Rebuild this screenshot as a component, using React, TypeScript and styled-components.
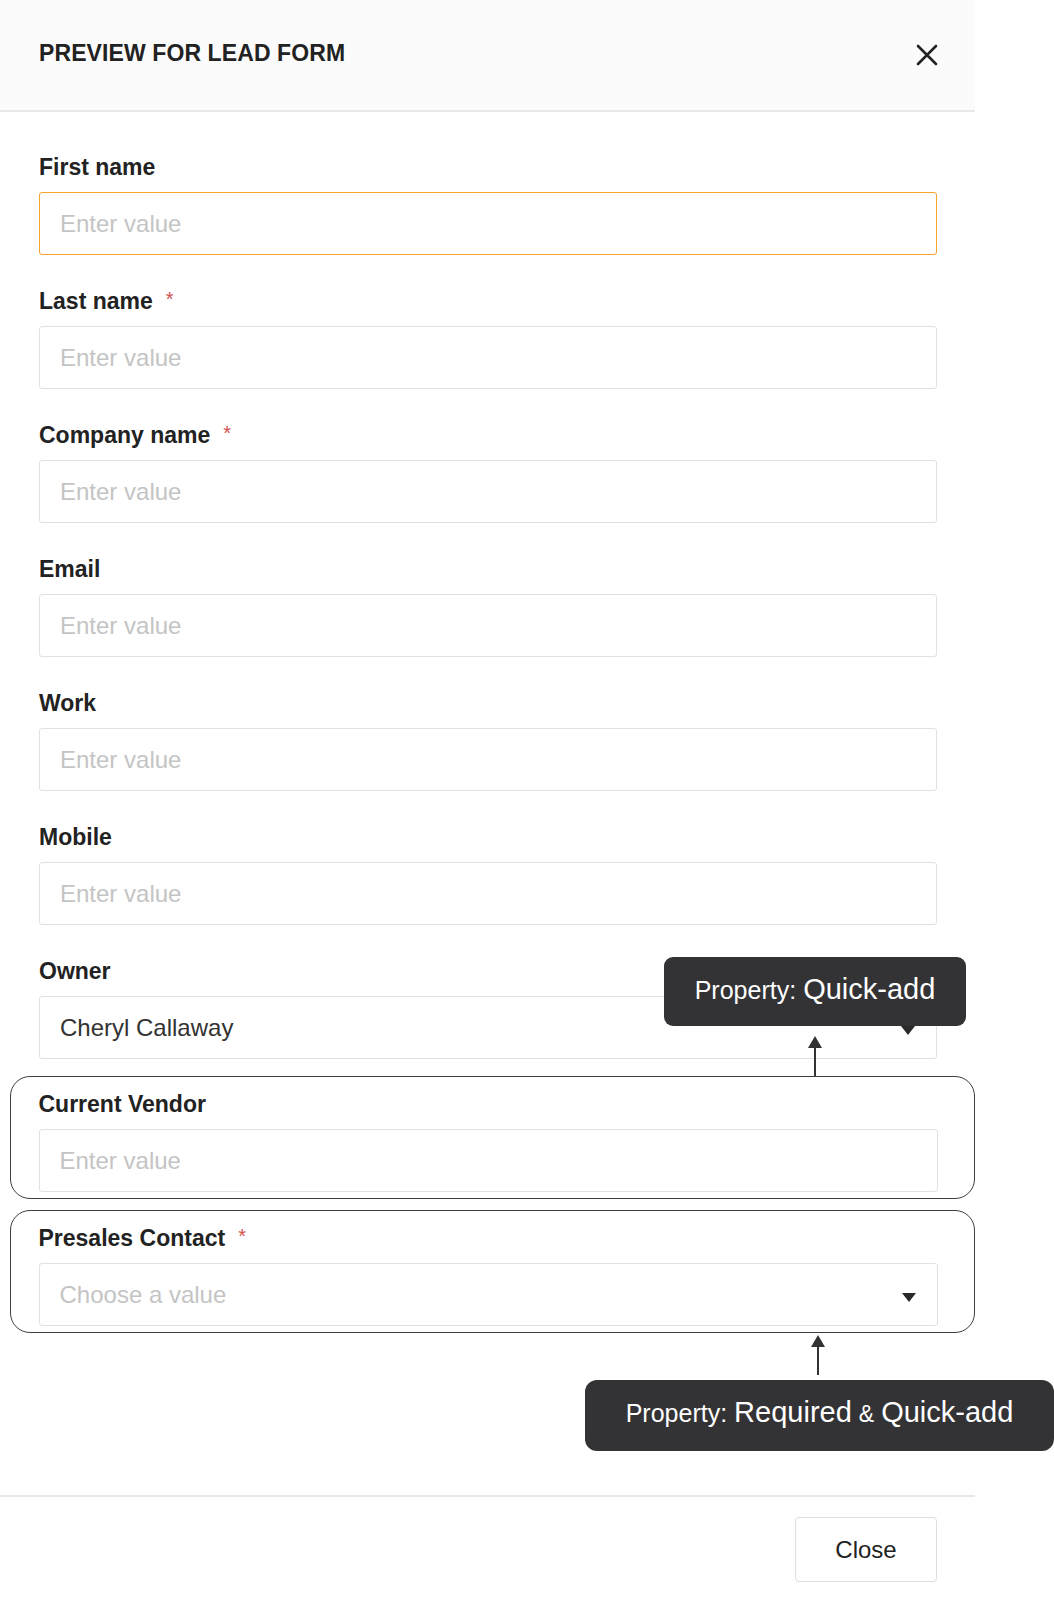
import styled, { createGlobalStyle } from 'styled-components';

const GlobalStyle = createGlobalStyle`
  * {
    box-sizing: border-box;
  }
  body {
    margin: 0;
    background: #ffffff;
    font-family: 'Liberation Sans', Arial, sans-serif;
    color: #222222;
  }
`;

type FieldDef = {
  label: string;
  required?: boolean;
  kind: 'input' | 'select';
  value?: string;
  placeholder: string;
  active?: boolean;
  boxed?: boolean;
};

const fields: FieldDef[] = [
  { label: 'First name', kind: 'input', placeholder: 'Enter value', active: true },
  { label: 'Last name', required: true, kind: 'input', placeholder: 'Enter value' },
  { label: 'Company name', required: true, kind: 'input', placeholder: 'Enter value' },
  { label: 'Email', kind: 'input', placeholder: 'Enter value' },
  { label: 'Work', kind: 'input', placeholder: 'Enter value' },
  { label: 'Mobile', kind: 'input', placeholder: 'Enter value' },
  { label: 'Owner', kind: 'select', placeholder: 'Choose a value', value: 'Cheryl Callaway' },
  { label: 'Current Vendor', kind: 'input', placeholder: 'Enter value', boxed: true },
  {
    label: 'Presales Contact',
    required: true,
    kind: 'select',
    placeholder: 'Choose a value',
    boxed: true,
  },
];

function CloseIcon() {
  return (
    <svg width="22" height="22" viewBox="0 0 22 22">
      <path d="M2 2 L20 20 M20 2 L2 20" stroke="#222" strokeWidth="2.6" strokeLinecap="round" />
    </svg>
  );
}

function UpArrow() {
  return (
    <svg width="16" height="40" viewBox="0 0 16 40">
      <path d="M8 0 L15 12 L1 12 Z" fill="#333" />
      <path d="M8 10 L8 40" stroke="#333" strokeWidth="2" />
    </svg>
  );
}

function FieldBlock({ f }: { f: FieldDef }) {
  const Wrap = f.boxed ? BoxedField : Field;
  return (
    <Wrap>
      <Label>
        {f.label}
        {f.required && <Star>*</Star>}
      </Label>
      {f.kind === 'input' ? (
        <Input $active={f.active} placeholder={f.placeholder} readOnly />
      ) : (
        <SelectBox>
          <SelectText $empty={!f.value}>{f.value || f.placeholder}</SelectText>
          <Caret />
        </SelectBox>
      )}
    </Wrap>
  );
}

export default function App() {
  return (
    <>
      <GlobalStyle />
      <Page>
        <Panel>
          <Header>
            <Title>PREVIEW FOR LEAD FORM</Title>
            <CloseButton>
              <CloseIcon />
            </CloseButton>
          </Header>
          <Form>
            {fields.map((f) => (
              <FieldBlock key={f.label} f={f} />
            ))}
          </Form>
          <Footer>
            <FooterButton>Close</FooterButton>
          </Footer>
        </Panel>

        {/* annotations laid over the form */}
        <Tooltip $left={664} $top={957} $width={302} $height={69} $radius={9}>
          <Small>Property:</Small>
          <Big>Quick-add</Big>
        </Tooltip>
        <Arrow $left={807} $top={1036}>
          <UpArrow />
        </Arrow>
        <Arrow $left={810} $top={1335}>
          <UpArrow />
        </Arrow>
        <Tooltip $left={585} $top={1380} $width={469} $height={71} $radius={12}>
          <Small>Property:</Small>
          <Big>Required</Big>
          <Amp>&amp;</Amp>
          <Big>Quick-add</Big>
        </Tooltip>
      </Page>
    </>
  );
}

const Page = styled.div`
  position: relative;
  width: 1054px;
  min-height: 1600px;
  overflow: hidden;
`;

const Panel = styled.div`
  width: 975px;
  display: flex;
  flex-direction: column;
`;

const Header = styled.div`
  height: 112px;
  display: flex;
  align-items: center;
  justify-content: space-between;
  padding: 0 37px 0 39px;
  background: #fbfbfb;
  border-bottom: 2px solid #e8e8e8;
`;

const Title = styled.div`
  font-size: 23px;
  font-weight: 700;
  color: #222;
  letter-spacing: 0.1px;
  margin-top: -4px;
`;

const CloseButton = styled.div`
  width: 22px;
  height: 22px;
  display: flex;
`;

const Form = styled.div`
  display: flex;
  flex-direction: column;
  padding: 41px 0 162px;
`;

const Field = styled.div`
  display: flex;
  flex-direction: column;
  gap: 11px;
  padding: 0 38px 0 39px;

  & + & {
    margin-top: 32px;
  }
`;

const BoxedField = styled(Field)`
  margin-left: 10px;
  padding: 13px 36.5px 6px 27.5px;
  border: 1.5px solid #3d3d3d;
  border-radius: 20px;

  && {
    margin-top: 17px;
  }
  && + && {
    margin-top: 11px;
  }
`;

const Label = styled.div`
  height: 28px;
  line-height: 28px;
  font-size: 23px;
  font-weight: 700;
  color: #222;
  display: flex;
  align-items: center;
`;

const Star = styled.span`
  color: #d3524e;
  font-size: 20px;
  font-weight: 400;
  margin-left: 13px;
  margin-top: -5px;
`;

const Input = styled.input<{ $active?: boolean }>`
  height: 63px;
  width: 100%;
  padding: 0 20px;
  border: 1.5px solid ${(p) => (p.$active ? '#f5a42c' : '#e1e1e1')};
  border-radius: 3px;
  background: #fff;
  font-family: 'Liberation Sans', Arial, sans-serif;
  font-size: 24px;
  color: #333;
  outline: none;

  &::placeholder {
    color: #c4c4c4;
  }
`;

const SelectBox = styled.div`
  height: 63px;
  display: flex;
  align-items: center;
  justify-content: space-between;
  padding: 0 21px 0 20px;
  border: 1.5px solid #e1e1e1;
  border-radius: 3px;
  background: #fff;
`;

const SelectText = styled.span<{ $empty?: boolean }>`
  font-size: 24px;
  color: ${(p) => (p.$empty ? '#c4c4c4' : '#333')};
`;

const Caret = styled.span`
  width: 0;
  height: 0;
  margin-top: 5px;
  border-left: 7px solid transparent;
  border-right: 7px solid transparent;
  border-top: 9px solid #2a2a2a;
`;

const Footer = styled.div`
  display: flex;
  justify-content: flex-end;
  padding: 20px 38px 17px;
  border-top: 2px solid #e8e8e8;
`;

const FooterButton = styled.div`
  width: 142px;
  height: 65px;
  display: flex;
  align-items: center;
  justify-content: center;
  border: 1.5px solid #dedede;
  border-radius: 4px;
  font-size: 24px;
  color: #222;
`;

const Tooltip = styled.div<{ $left: number; $top: number; $width: number; $height: number; $radius: number }>`
  position: absolute;
  left: ${(p) => p.$left}px;
  top: ${(p) => p.$top}px;
  width: ${(p) => p.$width}px;
  height: ${(p) => p.$height}px;
  border-radius: ${(p) => p.$radius}px;
  background: #333335;
  color: #fff;
  display: flex;
  align-items: baseline;
  justify-content: center;
  padding-top: 16px;
  gap: 7px;
  font-family: 'Liberation Sans', Arial, sans-serif;
  white-space: nowrap;
`;

const Small = styled.span`
  font-size: 25px;
`;

const Big = styled.span`
  font-size: 29px;
`;

const Amp = styled.span`
  font-size: 23px;
`;

const Arrow = styled.div<{ $left: number; $top: number }>`
  position: absolute;
  left: ${(p) => p.$left}px;
  top: ${(p) => p.$top}px;
  width: 16px;
  height: 40px;
  display: flex;
`;
